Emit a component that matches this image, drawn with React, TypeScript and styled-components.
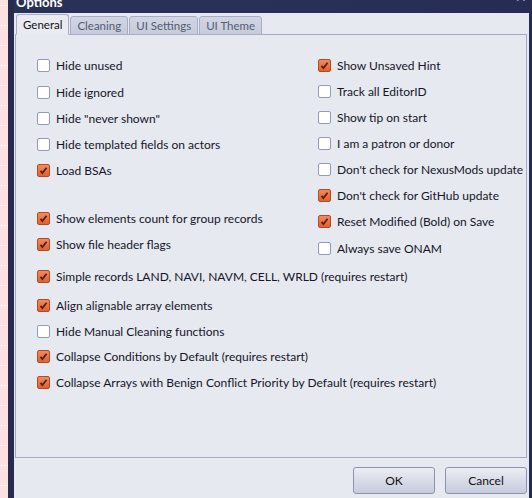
import React from 'react'
import styled, { createGlobalStyle } from 'styled-components'

const GlobalStyle = createGlobalStyle`
  html, body {
    margin: 0;
    padding: 0;
    height: 100%;
    overflow: hidden;
  }
  body {
    background-color: #fde0e0;
    background-image:
      linear-gradient(to right, #fde0e0 50%, transparent 50%),
      linear-gradient(to bottom, transparent 5px, #ffffff 5px, #ffffff 6px, transparent 6px);
    background-size: 3px 20px, 100% 20px;
    font-family: Lato, "Noto Sans", sans-serif;
    font-size: 12px;
  }
`

const Page = styled.div`
  height: 498px;
  padding-left: 8px;
  display: flex;
`

const Window = styled.div`
  flex: 1;
  display: flex;
  flex-direction: column;
  background: #262b4f;
  padding: 0 3px 0 6px;
`

const TitleBar = styled.div`
  height: 13px;
  display: flex;
  justify-content: space-between;
  align-items: flex-end;
  overflow: hidden;
  background: linear-gradient(to right, #2a3158, #293055 60%, #272d52);
  color: #fff;
`

const Title = styled.span`
  font-weight: bold;
  font-size: 13px;
  line-height: 13px;
  margin: 0 0 4px 2px;
`

const Close = styled.span`
  font-size: 14px;
  line-height: 14px;
  color: #c8cbe0;
  margin: 0 2px 9px 0;
`

const Client = styled.div`
  flex: 1;
  background: #e6e9ef;
  padding: 1px 2px 0 1px;
  display: flex;
  flex-direction: column;
`

const TabBar = styled.div`
  display: flex;
  align-items: flex-end;
  height: 21px;
  position: relative;
  z-index: 1;
`

const Tab = styled.div<{ $active?: boolean }>`
  height: ${p => (p.$active ? '21px' : '19px')};
  box-sizing: border-box;
  padding: 0 6px;
  display: flex;
  align-items: center;
  font-size: 11.5px;
  border: 1px solid #a8acc6;
  border-bottom: ${p => (p.$active ? '1px solid #e6e9ef' : '1px solid #a8acc6')};
  border-radius: 3px 3px 0 0;
  background: ${p => (p.$active ? '#e9ebf1' : 'linear-gradient(#d2d6e3, #c6cbdb)')};
  color: ${p => (p.$active ? '#111' : '#555a74')};
  margin-right: 1px;
  margin-left: ${p => (p.$active ? '1px' : '0')};
`

const Panel = styled.div`
  height: 424px;
  box-sizing: border-box;
  border: 1px solid #a5a9c4;
  margin-top: -1px;
  padding: 24px 0 0 21px;
`

const Columns = styled.div`
  display: grid;
  grid-template-columns: 281px 1fr;
`

const Column = styled.div`
  display: flex;
  flex-direction: column;
`

const Row = styled.label<{ $mt?: number }>`
  display: flex;
  align-items: center;
  height: 13px;
  gap: 6px;
  margin-top: ${p => p.$mt ?? 0}px;
  color: #15152a;
  white-space: nowrap;
`

const Box = styled.span<{ $checked?: boolean }>`
  width: 13px;
  height: 13px;
  flex: none;
  box-sizing: border-box;
  border-radius: 2px;
  border: 1px solid ${p => (p.$checked ? '#b34a26' : '#9599bf')};
  background: ${p => (p.$checked ? 'linear-gradient(#f28a5c, #e3602f)' : '#ffffff')};
  display: flex;
  align-items: center;
  justify-content: center;
`

const ButtonBar = styled.div`
  display: flex;
  justify-content: flex-end;
  gap: 10px;
  margin-top: 9px;
`

const Button = styled.button`
  width: 82px;
  height: 27px;
  box-sizing: border-box;
  border: 1px solid #8d92b2;
  border-radius: 3px;
  background: linear-gradient(#eceef4, #d9dce8 50%, #c6cbdd);
  font-family: inherit;
  font-size: 12px;
  color: #111;
`

function Check({ label, checked, mt }: { label: string; checked?: boolean; mt?: number }) {
  return (
    <Row $mt={mt}>
      <Box $checked={checked}>
        {checked && (
          <svg width="9" height="9" viewBox="0 0 9 9">
            <path d="M1.5 4.8 L3.4 7 L7.6 1.8" fill="none" stroke="#4d2414" strokeWidth="1.8" />
          </svg>
        )}
      </Box>
      {label}
    </Row>
  )
}

export default function App() {
  return (
    <Page>
      <GlobalStyle />
      <Window>
        <TitleBar>
          <Title>Options</Title>
          <Close>✕</Close>
        </TitleBar>
        <Client>
          <TabBar>
            <Tab $active>General</Tab>
            <Tab>Cleaning</Tab>
            <Tab>UI Settings</Tab>
            <Tab>UI Theme</Tab>
          </TabBar>
          <Panel>
            <Columns>
              <Column>
                <Check label="Hide unused" />
                <Check label="Hide ignored" mt={14} />
                <Check label={'Hide "never shown"'} mt={13} />
                <Check label="Hide templated fields on actors" mt={13} />
                <Check label="Load BSAs" checked mt={13} />
                <Check label="Show elements count for group records" checked mt={35} />
                <Check label="Show file header flags" checked mt={13} />
              </Column>
              <Column>
                <Check label="Show Unsaved Hint" checked />
                <Check label="Track all EditorID" mt={13} />
                <Check label="Show tip on start" mt={13} />
                <Check label="I am a patron or donor" mt={13} />
                <Check label="Don't check for NexusMods update" mt={13} />
                <Check label="Don't check for GitHub update" checked mt={13} />
                <Check label="Reset Modified (Bold) on Save" checked mt={13} />
                <Check label="Always save ONAM" mt={14} />
              </Column>
            </Columns>
            <Check label="Simple records LAND, NAVI, NAVM, CELL, WRLD (requires restart)" checked mt={15} />
            <Check label="Align alignable array elements" checked mt={16} />
            <Check label="Hide Manual Cleaning functions" mt={13} />
            <Check label="Collapse Conditions by Default (requires restart)" checked mt={12} />
            <Check label="Collapse Arrays with Benign Conflict Priority by Default (requires restart)" checked mt={13} />
          </Panel>
          <ButtonBar>
            <Button>OK</Button>
            <Button>Cancel</Button>
          </ButtonBar>
        </Client>
      </Window>
    </Page>
  )
}
